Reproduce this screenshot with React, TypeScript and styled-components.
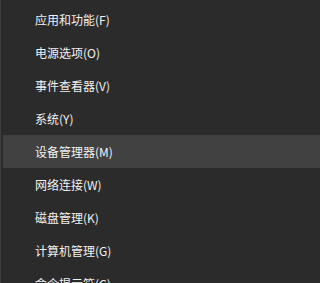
import styled, { createGlobalStyle } from 'styled-components';

const GlobalStyle = createGlobalStyle`
  html, body {
    margin: 0;
    padding: 0;
    background: #2b2b2b;
  }
  body {
    font-family: "Noto Sans CJK SC", "Noto Sans", sans-serif;
  }
`

const Menu = styled.ul`
  list-style: none;
  margin: 0;
  padding: 3px 0 0 2px;
  width: 100%;
  height: 283px;
  box-sizing: border-box;
  overflow: hidden;
  background: #2b2b2b;
  border-left: 1px solid #3e3e3e;
`
const Item = styled.li<{ $active?: boolean }>`
  height: 33px;
  display: flex;
  align-items: center;
  padding-left: 32px;
  font-size: 12px;
  color: #f2f2f2;
  background: ${props => (props.$active ? '#414141' : 'transparent')};
  white-space: nowrap;
`

const items = [
  '应用和功能(F)',
  '电源选项(O)',
  '事件查看器(V)',
  '系统(Y)',
  '设备管理器(M)',
  '网络连接(W)',
  '磁盘管理(K)',
  '计算机管理(G)',
  '命令提示符(C)',
];

function App() {
  return (
    <>
      <GlobalStyle />
      <Menu>
        {items.map((label, i) => (
          <Item key={label} $active={i === 4}>
            {label}
          </Item>
        ))}
      </Menu>
    </>
  )
}

export default App;
